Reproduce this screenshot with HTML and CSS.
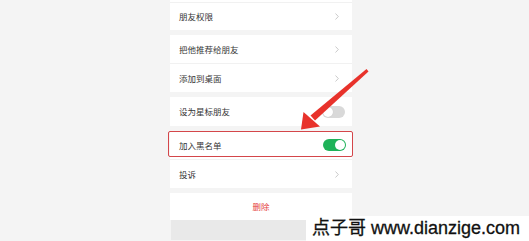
FILE: index.html
```html
<!DOCTYPE html>
<html lang="zh">
<head>
<meta charset="utf-8">
<title>资料设置</title>
<link rel="stylesheet" href="styles.css">
</head>
<body>
<div class="page">
  <div class="col">
    <div class="card card-1">
      <div class="stub"></div>
      <div class="row"><span class="label">朋友权限</span><svg class="chev" viewBox="0 0 4 7" width="4" height="7"><polyline points="0.5,0.5 3.3,3.5 0.5,6.5" /></svg></div>
    </div>
    <div class="card">
      <div class="row"><span class="label">把他推荐给朋友</span><svg class="chev" viewBox="0 0 4 7" width="4" height="7"><polyline points="0.5,0.5 3.3,3.5 0.5,6.5" /></svg></div>
      <div class="row"><span class="label">添加到桌面</span><svg class="chev" viewBox="0 0 4 7" width="4" height="7"><polyline points="0.5,0.5 3.3,3.5 0.5,6.5" /></svg></div>
    </div>
    <div class="card">
      <div class="row tall"><span class="label">设为星标朋友</span><span class="toggle off"><span class="knob"></span></span></div>
    </div>
    <div class="card">
      <div class="row highlight"><span class="label">加入黑名单</span><span class="toggle on"><span class="knob"></span></span></div>
      <div class="row"><span class="label">投诉</span><svg class="chev" viewBox="0 0 4 7" width="4" height="7"><polyline points="0.5,0.5 3.3,3.5 0.5,6.5" /></svg></div>
    </div>
    <div class="card card-del">
      <div class="row del"><span class="danger">删除</span></div>
    </div>
  </div>
  <div class="bottom"></div>

  <svg class="arrow" viewBox="0 0 529 241" width="529" height="241">
    <polygon class="shaft" points="366.5,69 368.5,71.5 315,120.5 310.5,115.5" />
    <polygon class="head" points="301,129.5 303.5,112 320,126.5" />
  </svg>

  <div class="watermark">点子哥 www.dianzige.com</div>
</div>
</body>
</html>
```

FILE: styles.css
```css
* {
  box-sizing: border-box;
}

html, body {
  margin: 0;
  padding: 0;
}

body {
  background: #f4f4f4;
  font-family: "Noto Sans CJK SC", "Noto Sans", sans-serif;
  width: 529px;
  height: 241px;
  overflow: hidden;
}

.page {
  position: relative;
  width: 529px;
  height: 241px;
}

.col {
  margin-left: 170px;
  width: 182px;
  display: flex;
  flex-direction: column;
  gap: 5px;
}

.card {
  background: #ffffff;
  display: flex;
  flex-direction: column;
}

.stub {
  height: 3px;
  border-bottom: 1px solid #f1f1f1;
}

.row {
  height: 28px;
  display: flex;
  align-items: center;
  justify-content: space-between;
  padding: 0 13px 0 9px;
}

.row + .row {
  border-top: 1px solid #f1f1f1;
  height: 29px;
}

.card-1 .row {
  height: 27px;
}

.row.tall {
  height: 29px;
  padding-right: 7px;
}

.label {
  font-size: 8.5px;
  color: #363636;
  line-height: 1;
  letter-spacing: 0;
}

.chev {
  display: block;
}

.chev polyline {
  fill: none;
  stroke: #c4c4c4;
  stroke-width: 0.9;
}

.toggle {
  width: 23px;
  height: 12px;
  border-radius: 6px;
  display: flex;
  align-items: center;
  padding: 1px;
}

.toggle .knob {
  width: 10px;
  height: 10px;
  border-radius: 50%;
  background: #ffffff;
}

.toggle.off {
  background: #d9d9d9;
  justify-content: flex-start;
}

.toggle.off .knob {
  box-shadow: 0 0 1px rgba(0, 0, 0, 0.15);
}

.toggle.on {
  background: #1fb259;
  justify-content: flex-end;
}

.row.highlight {
  position: relative;
  padding-right: 6px;
}

.row.highlight::after {
  content: "";
  position: absolute;
  top: 0;
  bottom: 2px;
  left: -2px;
  right: -1px;
  border: 1.6px solid #d4464a;
  border-radius: 2px;
}

.card-del .row {
  height: 27px;
  justify-content: center;
  padding: 0;
}

.danger {
  font-size: 8.5px;
  color: #e5423f;
  line-height: 1;
}

.bottom {
  margin-left: 171px;
  width: 181px;
  height: 20px;
  background: #e9e9e9;
}

.arrow {
  position: absolute;
  left: 0;
  top: 0;
  pointer-events: none;
}

.arrow .shaft,
.arrow .head {
  fill: #e8322b;
}

.watermark {
  position: absolute;
  right: 0;
  bottom: 0;
  width: 223px;
  height: 25px;
  background: #ffffff;
  color: #111111;
  font-family: "Liberation Sans", "Noto Sans CJK SC", sans-serif;
  font-size: 18px;
  font-weight: 400;
  -webkit-text-stroke: 0.3px #111111;
  line-height: 25px;
  padding-left: 6px;
  white-space: nowrap;
}
```
